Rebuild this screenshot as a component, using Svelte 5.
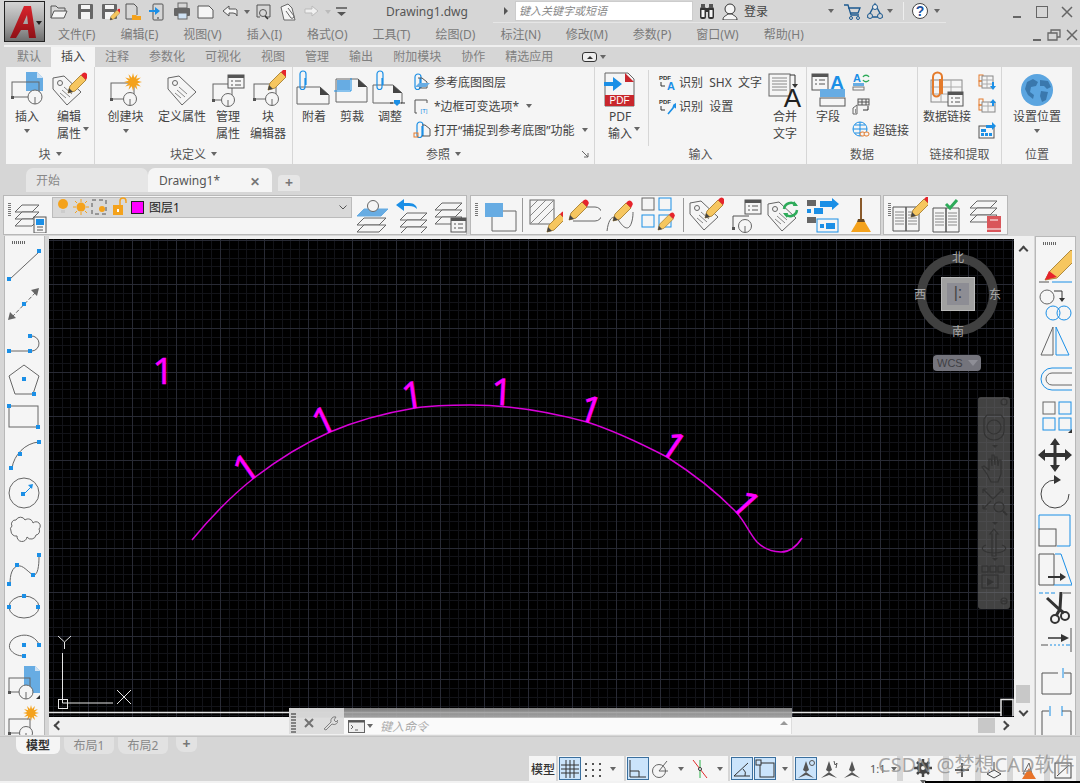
<script>
  const BLUE = "#1b8fe6";
  const LBLUE = "#67ace3";
  const ORANGE = "#f4a21c";

  const pt = (x, y) => `<rect x="${x - 2}" y="${y - 2}" width="4" height="4" fill="${BLUE}" stroke="none"/>`;
  const pencil = (x, y, s = 1) =>
    `<g transform="translate(${x} ${y}) scale(${s})"><path d="M0 0l2-7 11-11 5 5-11 11z" fill="#f6c65f" stroke="#b08a3e"/><path d="M0 0l1-5 4 4z" fill="#444" stroke="none"/><path d="M13-18l2-2a3 3 0 0 1 4 1 3 3 0 0 1 0 4l-1 2z" fill="#e6242c" stroke="none"/></g>`;
  const blk = (x, y, w = 24, h = 15, r = 7) =>
    `<rect x="${x}" y="${y}" width="${w}" height="${h}"/><rect x="${x - 1}" y="${y + h - 1}" width="3" height="3" fill="#555" stroke="none"/><circle cx="${x + w - 4}" cy="${y + h}" r="${r}" fill="#f5f5f5"/><path d="M${x + w - 4} ${y + h}v${r}" />`;
  const tag = (x, y) =>
    `<g transform="translate(${x} ${y})"><path d="M0 4L11 2 28 18 14 31 0 15z" fill="#f5f5f5"/><circle cx="7" cy="9" r="2.5"/><path d="M11 13l8 7M9 16l8 7M7 19l6 5" stroke="#888"/></g>`;
  const star = (x, y, r = 9) => {
    let d = "";
    for (let i = 0; i < 24; i++) {
      const a = (i * Math.PI) / 12;
      const q = i % 2 ? r * 0.5 : r;
      d += (i ? "L" : "M") + (x + q * Math.cos(a)).toFixed(1) + " " + (y + q * Math.sin(a)).toFixed(1);
    }
    return `<path d="${d}z" fill="${ORANGE}" stroke="none"/>`;
  };
  const list = (x, y, w = 16, h = 13) =>
    `<rect x="${x}" y="${y}" width="${w}" height="${h}" fill="#f5f5f5" stroke="#555"/><rect x="${x}" y="${y}" width="${w}" height="3" fill="#555" stroke="none"/><path d="M${x + 3} ${y + 6}h2M${x + 7} ${y + 6}h${w - 10}M${x + 3} ${y + 10}h2M${x + 7} ${y + 10}h${w - 10}" stroke="#555"/>`;
  const sheet = (x, y, w, h) =>
    `<path d="M${x} ${y + h}V${y}h${w - 9}l9 8v${h - 8}z" fill="#f5f5f5"/><path d="M${x + w - 9} ${y}l9 8h-9z" fill="#444" stroke="none"/>`;
  const clip = (x, y, s = BLUE) =>
    `<path d="M${x + 5} ${y + 4}v9a2.5 2.5 0 0 1-5 0V3a3 3 0 0 1 6 0v11" stroke="${s}" stroke-width="1.2" transform="translate(0 1)"/>`;
  const lay = (x, y, w = 18, st = "#666", f = "#f5f5f5") =>
    `<path d="M${x} ${y + 7}l7-7h${w}l-7 7z" fill="${f}" stroke="${st}"/>`;
  const lines = (x, y, w, n, gap = 3) => {
    let d = "";
    for (let i = 0; i < n; i++) d += `M${x} ${y + i * gap}h${w}`;
    return `<path d="${d}" stroke="#888"/>`;
  };
  const book = (x, y) =>
    `<path d="M${x} ${y + 3}h13v24h-13zM${x + 13} ${y + 3}h13v24h-13z" fill="#f5f5f5" stroke="#555"/>` + lines(x + 2, y + 8, 9, 5, 3) + lines(x + 15, y + 8, 9, 5, 3);

  const icons = {
    // ribbon large
    insert: `<path d="M17 2h11l6 6v13H17z" fill="${LBLUE}" stroke="none"/><path d="M28 2l6 6h-6z" fill="#cfe2f4" stroke="none"/>` + blk(3, 12, 27, 15, 7),
    editattr: tag(2, 4) + pencil(17, 23),
    createblk: blk(3, 13, 23, 16, 6.5) + star(25, 12, 9),
    defattr: tag(4, 4),
    mgattr: blk(3, 14, 19, 16, 6.5) + list(18, 5),
    blkedit: blk(4, 14, 22, 15, 6.5) + pencil(18, 20),
    attach: sheet(1, 17, 32, 17) + clip(4, 3),
    clipref: sheet(2, 9, 31, 23) + `<rect x="3" y="10" width="13" height="10" fill="${LBLUE}" stroke="none"/><path d="M0 21h17V8" stroke="${BLUE}"/>`,
    adjust: sheet(1, 15, 29, 18) + clip(5, 3) + `<path d="M22 30h6v3l-3 3-3-3z" fill="${BLUE}" stroke="none"/><path d="M18 33h3M29 33h4" stroke="#333"/>`,
    pdf: `<path d="M3 3h23l6 6v27H3z" fill="#f5f5f5"/><path d="M23 3l9 9h-9z" fill="#c8262c" stroke="none"/><rect x="3" y="25" width="29" height="11" fill="#c8262c" stroke="none"/><text x="17.5" y="34" class="svg-t pdf-t">PDF</text><path d="M2 12h9V7l9 7-9 7v-5H2z" fill="${BLUE}" stroke="none"/>`,
    merge: `<rect x="2" y="4" width="21" height="22" fill="#f5f5f5"/>` + lines(5, 8, 15, 5, 3) + `<path d="M23 5h5v10" stroke="#333"/><path d="M25 14h6l-3 4z" fill="#333" stroke="none"/><text x="25.5" y="37" class="svg-t merge-t">A</text>`,
    field: list(2, 4, 16, 16) + `<text x="27" y="19" class="svg-t fa-t">A</text><rect x="10" y="19" width="25" height="8" fill="${LBLUE}" stroke="none"/><rect x="10" y="28" width="25" height="8" fill="#f5f5f5" stroke="#555"/>`,
    datalink: `<rect x="2" y="10" width="31" height="22" fill="#f5f5f5" stroke="#888"/><path d="M2 17h31M2 24h31M12 10v22M22 10v22" stroke="#aaa"/><path d="M11 9v14a3.500 3.500 0 0 1-7 0V7a4.500 4.500 0 0 1 9 0v17" stroke="#e47b2c" stroke-width="2"/>` + list(19, 22, 15, 14),
    globe: `<circle cx="18" cy="20" r="16" fill="#5ba5e0" stroke="none"/><path d="M8 12l6-3 5 3-2 4-5 1-1 5 4 3-1 4-5-4-3-6zM21 10l8 1 3 6-4 2-3-3-4 0zM22 21l7 1-2 8-4 2-2-6z" fill="#3a78ad" stroke="none"/>`,
    // ribbon small
    s_under: clip(2, 0) + `<path d="M5 5h4l5 4v6H6" stroke="#555"/><path d="M2 14l4-4h11l-4 4z" fill="${LBLUE}" stroke="none"/>`,
    s_frame: `<path d="M2 16V3h12v3M2 16h2" stroke="#555"/><text x="11" y="16" class="svg-t tiny-t">[T]</text>`,
    s_open: clip(4, 0) + `<path d="M9 4h3l5 4v7h-8" stroke="#555"/><rect x="1" y="12" width="4" height="4" stroke="#e47b2c"/>`,
    s_shx: `<text x="1" y="7" class="svg-t pdfs-t">PDF</text><path d="M3 9v4h4" stroke="#333"/><text x="9" y="17" class="svg-t aa-t">A</text>`,
    s_set: `<text x="1" y="7" class="svg-t pdfs-t">PDF</text><path d="M3 9v4h4" stroke="#333"/><path d="M10 17l5-6 1-3 2-1-1 3 1 1" stroke="${BLUE}" stroke-width="1.6"/>`,
    s_upd: `<text x="1" y="9" class="svg-t aa-t">A</text><rect x="1" y="10" width="11" height="3" fill="${LBLUE}" stroke="none"/><rect x="1" y="14" width="11" height="3" fill="#f5f5f5" stroke="#777"/><path d="M11 4a3.5 3.5 0 0 1 6 0M17 7a3.5 3.5 0 0 1-6 0" stroke="#2eab5a" stroke-width="1.4"/>`,
    s_tbl: `<path d="M5 8v9H1v-6z" fill="#f5f5f5"/><rect x="6" y="2" width="11" height="6" fill="#eee" stroke="#555"/><path d="M6 5h11M10 2v6M14 2v6" stroke="#555"/><path d="M16 9v4h-5" stroke="#333"/><path d="M3 13h1M3 15h1" stroke="#333"/>`,
    s_web: `<circle cx="8" cy="8" r="7" fill="#f5f5f5" stroke="${BLUE}"/><path d="M1 8h14M8 1v14M3 4h10M3 12h10" stroke="${BLUE}"/><rect x="8" y="11" width="5" height="4" rx="2" fill="#f5f5f5" stroke="#e47b2c"/><rect x="12" y="11" width="5" height="4" rx="2" fill="#f5f5f5" stroke="#e47b2c"/>`,
    s_dl1: `<rect x="1" y="2" width="4" height="6" stroke="#e47b2c"/><rect x="1" y="8" width="4" height="5" stroke="#e47b2c"/><rect x="4" y="3" width="11" height="12" fill="#f5f5f5" stroke="#888"/><path d="M4 7h11M4 11h11M9 3v12" stroke="#aaa"/><path d="M14 9h2v4h2l-3 4-3-4h2z" fill="${BLUE}" stroke="none"/>`,
    s_dl2: `<rect x="1" y="2" width="4" height="6" stroke="#e47b2c"/><rect x="1" y="8" width="4" height="5" stroke="#e47b2c"/><rect x="4" y="5" width="13" height="10" fill="#f5f5f5" stroke="#888"/><path d="M4 9h13M10 5v10" stroke="#aaa"/><path d="M14 9V6h-2l3-4 3 4h-2v3z" fill="${BLUE}" stroke="none"/>`,
    s_dl3: `<rect x="1" y="5" width="15" height="12" fill="#f5f5f5" stroke="#555"/>` + `<rect x="3" y="8" width="5" height="3" fill="${BLUE}" stroke="none"/><rect x="3" y="12" width="3" height="3" fill="${BLUE}" stroke="none"/><rect x="7" y="12" width="3" height="3" fill="${BLUE}" stroke="none"/><rect x="11" y="12" width="3" height="3" fill="${BLUE}" stroke="none"/><path d="M8 4h6V1l4 4-4 4V7H8z" fill="${BLUE}" stroke="none"/>`,
    // quick access
    q_open: `<path d="M2 16V4h5l2 2h7v3" stroke="#555"/><path d="M2 16l3-7h13l-3 7z" fill="#f5f5f5" stroke="#555"/>`,
    q_save: `<rect x="2" y="2" width="15" height="15" rx="1" fill="#666" stroke="none"/><rect x="5" y="3" width="9" height="4" fill="#f5f5f5" stroke="none"/><rect x="5" y="10" width="9" height="7" fill="#f5f5f5" stroke="none"/>`,
    q_saveas: `<rect x="2" y="2" width="15" height="15" rx="1" fill="#666" stroke="none"/><rect x="5" y="3" width="9" height="4" fill="#f5f5f5" stroke="none"/><rect x="5" y="10" width="9" height="7" fill="#f5f5f5" stroke="none"/>` + pencil(10, 18, 0.55),
    q_sheet: `<path d="M3 17V2h8l3 3v8" stroke="#555"/><path d="M3 17h6" stroke="#555"/><path d="M9 18v-5h4l1 1h4v4z" fill="${ORANGE}" stroke="none"/>`,
    q_import: `<rect x="6" y="2" width="10" height="16" rx="1" stroke="#555"/><path d="M2 8h6V5l5 4-5 4v-3H2z" fill="${BLUE}" stroke="none"/><path d="M10 16h2" stroke="#333"/>`,
    q_print: `<rect x="6" y="1" width="9" height="5" stroke="#666"/><rect x="2" y="6" width="16" height="8" rx="1" fill="#666" stroke="none"/><rect x="6" y="11" width="9" height="6" fill="#cfe2f4" stroke="#666"/>`,
    q_page: `<path d="M2 16V4h11l4 4v8z" fill="#f5f5f5" stroke="#555"/>`,
    q_undo: `<path d="M8 4L2 9l6 5v-3h4a4 4 0 0 1 4 3V8a3 3 0 0 0-3-1H8z" fill="#f5f5f5" stroke="#555"/>`,
    q_redo: `<path d="M10 4l6 5-6 5v-3H3V7h7z" fill="#f0f0f0" stroke="#bbb"/>`,
    q_zoom: `<path d="M3 15V3h13v12h-4M3 15h3" stroke="#555"/><circle cx="9" cy="11" r="3.5" stroke="#555"/><path d="M11 14l3 3" stroke="#333" stroke-width="1.5"/>`,
    q_clip: `<path d="M2 5l7-3 4 4 3 12H5z" fill="#f5f5f5" stroke="#666"/><path d="M9 6l6 8a2 2 0 0 1-3 2L7 9" stroke="#666"/>`,
    q_menu: `<path d="M4 6h11" stroke="#555" stroke-width="1.5"/><path d="M5 10h9l-4.500 4z" fill="#555" stroke="none"/>`,
    binoc: `<rect x="2" y="5" width="6" height="12" rx="2" fill="#333" stroke="none"/><rect x="10" y="5" width="6" height="12" rx="2" fill="#333" stroke="none"/><rect x="3" y="2" width="4" height="4" fill="#555" stroke="none"/><rect x="11" y="2" width="4" height="4" fill="#555" stroke="none"/><rect x="7" y="6" width="4" height="4" fill="#333" stroke="none"/><rect x="3.500" y="8" width="3" height="7" fill="#f5f5f5" stroke="none"/><rect x="11.500" y="8" width="3" height="7" fill="#f5f5f5" stroke="none"/>`,
    user: `<circle cx="9" cy="7" r="5" fill="#f5f5f5" stroke="#333"/><path d="M2 18c0-4 3-4 5-6h4c2 2 5 2 5 6z" fill="#f5f5f5" stroke="#333"/>`,
    cart: `<path d="M1 3h4l3 10h8M5 6h12l-2 5H7" stroke="#1d5a90" stroke-width="1.300"/><circle cx="8" cy="16" r="1.500" stroke="#1d5a90"/><circle cx="15" cy="16" r="1.500" stroke="#1d5a90"/>`,
    a360: `<path d="M9 2l7 13H2z" stroke="#1d5a90" stroke-width="1.400"/><circle cx="9" cy="5" r="2.500" fill="#f0f0f0" stroke="#1d5a90"/><circle cx="4" cy="14" r="2.500" fill="#d6d6d6" stroke="#1d5a90"/><circle cx="14" cy="14" r="2.500" fill="#d6d6d6" stroke="#1d5a90"/>`,
    help: `<circle cx="9" cy="9" r="7.500" fill="#fff" stroke="#444"/><text x="9" y="14" class="svg-t help-t">?</text>`,
    // toolbars
    t_state: lay(1, 8, 17) + lay(1, 15, 17) + lay(1, 22, 17) + `<rect x="20" y="20" width="12" height="16" fill="#f5f5f5" stroke="#555"/><rect x="22" y="22" width="8" height="6" fill="${BLUE}" stroke="none"/><path d="M23 30h6M23 33h6" stroke="#555"/>`,
    t_iso: lay(2, 12, 24, LBLUE, LBLUE) + `<circle cx="18" cy="9" r="5.500" fill="#f5f5f5" stroke="#666"/>` + lay(2, 21, 22) + lay(2, 28, 22),
    t_prev: lay(6, 16, 20) + lay(6, 23, 20) + lay(6, 30, 20) + `<path d="M2 8l8-6v4h5c5 0 8 3 8 6-2-2-4-3-8-3h-5v5z" fill="${BLUE}" stroke="none"/>`,
    t_mgr: lay(2, 6, 20) + lay(2, 13, 20) + lay(2, 20, 20) + list(18, 21, 15, 14),
    t_make: `<path d="M21 14h13v20H10V20" stroke="#666"/><rect x="3" y="6" width="18" height="14" fill="${LBLUE}" stroke="none"/>`,
    t_hatch: `<rect x="3" y="3" width="24" height="24" stroke="#666"/><path d="M3 11l8-8M3 19L19 3M3 27L27 3M11 27l16-16" stroke="#888"/>` + pencil(20, 35),
    t_edit2: pencil(4, 23) + `<path d="M22 10h8a7 7 0 0 1 0 14H8" stroke="#666"/>`,
    t_spl: `<path d="M4 34c2-16 8-16 12-10s10 12 13 0c1-4 1-7 1-9" stroke="#666"/>` + pencil(10, 24),
    t_grid: `<rect x="1" y="1" width="12" height="12" stroke="#666"/><rect x="18" y="1" width="12" height="12" stroke="${BLUE}"/><rect x="1" y="18" width="12" height="12" stroke="${BLUE}"/><rect x="18" y="18" width="12" height="12" stroke="${BLUE}"/>` + pencil(17, 33, 0.85),
    t_tagedit: tag(2, 2) + pencil(17, 21),
    t_blkattr: `<path d="M6 31V19h16" stroke="#555"/><rect x="5" y="30" width="3" height="3" fill="#555" stroke="none"/><circle cx="18" cy="29" r="6.500" fill="#f5f5f5"/><path d="M18 29v6.500"/>` + list(18, 3, 16, 14),
    t_sync: tag(2, 3) + `<path d="M18 12a7 7 0 0 1 12-4M31 13a7 7 0 0 1-12 4" stroke="#2eab5a" stroke-width="2.500"/><path d="M28 4l4 5h-5zM21 21l-4-5h5z" fill="#2eab5a" stroke="none"/>`,
    t_order: `<rect x="2" y="3" width="9" height="6" fill="#666" stroke="none"/><rect x="2" y="12" width="4" height="4" fill="${BLUE}" stroke="none"/><rect x="9" y="11" width="9" height="6" fill="${BLUE}" stroke="none"/><rect x="2" y="20" width="9" height="6" fill="#666" stroke="none"/><path d="M15 4h12V1l7 6-7 6v-3H15z" fill="${BLUE}" stroke="none"/><rect x="12" y="22" width="21" height="13" fill="#f5f5f5" stroke="${BLUE}"/><rect x="15" y="27" width="4" height="4" fill="${BLUE}" stroke="none"/><rect x="21" y="26" width="9" height="6" fill="${BLUE}" stroke="none"/>`,
    t_broom: `<path d="M17 1v21" stroke="#8a5a2b" stroke-width="2"/><path d="M14 22h6l1 3h-8z" fill="#6b4a22" stroke="none"/><path d="M13 25h8l6 10H7z" fill="${ORANGE}" stroke="none"/>`,
    t_bookedit: book(1, 7) + pencil(19, 20),
    t_bookchk: book(3, 8) + `<path d="M16 7l4 4 7-8" stroke="#2eab5a" stroke-width="3"/>`,
    t_laybook: lay(2, 4, 20) + lay(2, 11, 20) + lay(2, 18, 20) + `<rect x="19" y="19" width="14" height="16" fill="#d9565a" stroke="none"/><path d="M19 32h14" stroke="#fff"/><path d="M22 23h8" stroke="#fff"/>`,
    // left tools
    l_line: `<path d="M4 32L33 5"/>` + pt(3, 32) + pt(33, 4),
    l_dim: `<path d="M6 32L31 6" stroke-dasharray="4 2"/><path d="M33 3l-2 8-6-6zM2 35l2-8 6 6z" fill="#666" stroke="none"/>` + pt(18, 19),
    l_poly: `<path d="M5 28h20M25 13a7.500 7.500 0 0 1 1 15"/>` + pt(3, 28) + pt(24, 28) + pt(24, 13),
    l_pent: `<path d="M18 4l15 11-6 18H9L3 15z"/>` + pt(18, 18) + pt(28, 33),
    l_rect: `<rect x="3" y="7" width="29" height="21"/>` + pt(3, 7) + pt(32, 28),
    l_arc: `<path d="M6 31C8 18 19 6 33 5"/>` + pt(5, 31) + pt(14, 17) + pt(33, 5),
    l_circle: `<circle cx="18" cy="18" r="15"/><path d="M18 19l8-8" stroke="${BLUE}"/><path d="M27 9l-1 5-4-4z" fill="${BLUE}" stroke="none"/>` + pt(17, 19),
    l_cloud: `<path d="M6 13a4 4 0 0 1 4-6 5 5 0 0 1 9 0 5 5 0 0 1 8 3 4 4 0 0 1 6 6 4 4 0 0 1-3 6 5 5 0 0 1-9 2 5 5 0 0 1-10-1 5 5 0 0 1-6-5 4 4 0 0 1 1-5z"/>`,
    l_spline: `<path d="M4 33c0-9 2-17 8-18 5-1 9 5 15 9 5 1 6-10 6-18"/>` + pt(3, 33) + pt(11, 14) + pt(27, 24) + pt(33, 4),
    l_ell: `<ellipse cx="18" cy="18" rx="15" ry="11"/>` + pt(18, 7) + pt(3, 18) + pt(32, 18),
    l_earc: `<path d="M33 17c-5-9-14-10-20-8C5 11 2 18 4 22c3 5 8 7 14 7"/>` + pt(18, 18) + pt(33, 18) + pt(18, 29),
    l_ins: `<path d="M18 1h11l5 5v22H18z" fill="${LBLUE}" stroke="none"/><path d="M29 1l5 5h-5z" fill="#cfe2f4" stroke="none"/>` + blk(3, 13, 21, 14, 7) + `<path d="M34 30v4h-4z" fill="#333" stroke="none"/>`,
    l_star: star(25, 10, 8) + blk(3, 16, 21, 14, 6.500),
    // right tools
    r_erase: `<path d="M7 33l5-9 21-21 7 7-21 21z" fill="#f6c65f" stroke="#b08a3e"/><path d="M7 33l4-9 8 6z" fill="#e6242c" stroke="none"/><path d="M1 35h10" stroke="#555"/><path d="M14 35h20" stroke="${BLUE}"/>`,
    r_fillet: `<circle cx="9" cy="12" r="7"/><path d="M16 6h8v8" stroke="#333"/><path d="M21 13h6l-3 4z" fill="#333" stroke="none"/><circle cx="15" cy="28" r="7" stroke="${BLUE}"/><circle cx="26" cy="28" r="7" stroke="${BLUE}"/>`,
    r_mirror: `<path d="M15 4L3 32h12z"/><path d="M18 4l13 28H18z" stroke="${BLUE}"/>`,
    r_offset: `<path d="M34 7H14a11 11 0 0 0 0 22h20" stroke="${BLUE}"/><path d="M34 12H14a6 6 0 0 0 0 12h20"/>`,
    r_array: `<rect x="5" y="3" width="12" height="12"/><rect x="21" y="3" width="12" height="12" stroke="${BLUE}"/><rect x="5" y="19" width="12" height="12" stroke="${BLUE}"/><rect x="21" y="19" width="12" height="12" stroke="${BLUE}"/><path d="M34 30v4h-4z" fill="#333" stroke="none"/>`,
    r_move: `<path d="M17 1l5 7h-3.500v8H27v-4l7 6-7 6v-4h-8.500v8H22l-5 7-5-7h3.500v-8H7v4l-7-6 7-6v4h8.500V8H12z" fill="#333" stroke="none"/>`,
    r_rotate: `<path d="M17 5A14 14 0 1 0 31 19" stroke="#444"/><path d="M16 0l7 5-7 4z" fill="#333" stroke="none"/>`,
    r_scale: `<path d="M1 16V2h31v31H19" stroke="${BLUE}"/><rect x="1" y="16" width="17" height="17" stroke="#555"/>`,
    r_stretch: `<path d="M16 3H1v31h15V3" stroke="#555"/><path d="M17 3h6l11 31H16" stroke="${BLUE}"/><path d="M10 25h12v-3l6 4-6 4v-3H10z" fill="#333" stroke="none"/>`,
    r_trim: `<path d="M1 4h4M7 4h4M13 4h4" stroke="${BLUE}"/><path d="M25 4h8" stroke="#555"/><path d="M23 3l-1 17-4 7M9 9l12 11 5 4" stroke="#333" stroke-width="3"/><circle cx="17" cy="30" r="4" stroke="#333" stroke-width="2"/><circle cx="27" cy="27" r="4" stroke="#333" stroke-width="2"/>`,
    r_extend: `<path d="M33 1v24" stroke="#555"/><path d="M10 11h15" stroke="#333" stroke-width="1.500"/><path d="M23 7l8 4-8 4z" fill="#333" stroke="none"/><path d="M3 18h7" stroke="#555"/><path d="M12 18h2M16 18h2M20 18h2M24 18h2M28 18h4" stroke="${BLUE}"/>`,
    r_brk: `<path d="M20 8H4v21h29V8h-7" stroke="#555"/><path d="M25 3v10" stroke="${BLUE}"/>`,
    r_brk2: `<path d="M4 36V8h7M31 8h2v28" stroke="#555"/><path d="M12 3v10M24 3v10" stroke="${BLUE}"/><path d="M24 8h7" stroke="#555"/>`,
    // status
    st_grid: `<path d="M2 7h18M2 11h18M2 15h18M7 2v18M11 2v18M15 2v18" stroke="#333"/>`,
    st_snap: `<path d="M3 6h2M10 6h2M17 6h2M3 12h2M10 12h2M17 12h2M3 18h2M10 18h2M17 18h2" stroke="#555" stroke-width="2"/>`,
    st_ortho: `<path d="M3 2v17h16" stroke="#333"/><path d="M3 13h9v6" stroke="#333"/>`,
    st_polar: `<circle cx="9" cy="13" r="6.500" stroke="#666"/><path d="M9 13l8-10" stroke="#666"/><path d="M9 13h9" stroke="#666"/>`,
    st_iso: `<path d="M4 2l14 18" stroke="#e02a2a"/><path d="M11 2v18" stroke="#2db24a"/><circle cx="11" cy="11" r="1.500" fill="#fff" stroke="#333"/>`,
    st_ang: `<path d="M3 18h16M3 18L17 5" stroke="#333"/><path d="M14 18a6 6 0 0 0-2-7" stroke="#333"/>`,
    st_osn: `<rect x="6" y="5" width="14" height="14" stroke="#333"/><rect x="2" y="2" width="5" height="5" fill="#cbe4fb" stroke="#333"/>`,
    st_ann: `<path d="M11 3l-3 9 3 2 3-2z" fill="#555" stroke="none"/><path d="M11 14l8 6-8-3-8 3z" fill="#555" stroke="none"/><circle cx="17" cy="5" r="2.500" stroke="#555"/>`,
    st_ann2: `<path d="M11 3l-3 9 3 2 3-2z" fill="#555" stroke="none"/><path d="M11 14l8 6-8-3-8 3z" fill="#555" stroke="none"/><path d="M16 3l1 4 2-2-1 5" stroke="#555"/>`,
    st_ann3: `<path d="M11 3l-3 9 3 2 3-2z" fill="#555" stroke="none"/><path d="M11 14l8 6-8-3-8 3z" fill="#555" stroke="none"/>`,
    st_gear: `<circle cx="11" cy="11" r="6" fill="#444" stroke="none"/><path d="M11 2v18M2 11h18M5 5l12 12M17 5L5 17" stroke="#444" stroke-width="2.500"/><circle cx="11" cy="11" r="2" fill="#f5f5f5" stroke="none"/>`,
    st_plus: `<path d="M11 4v14M4 11h14" stroke="#333" stroke-width="1.500"/>`,
    st_iso2: `<path d="M4 15l7 4 7-4-7-4z" stroke="#444"/><path d="M11 3v8" stroke="#444"/>`,
    st_warn: `<path d="M5 15L11 4l3 11z" stroke="#666"/><path d="M11 9l7 11H4z" fill="#e8742a" stroke="none"/>`,
    st_full: `<rect x="3" y="4" width="16" height="15" stroke="#444"/><path d="M5 17l12-11" stroke="#444"/>`,
    st_menu: `<path d="M3 5h16M3 11h16M3 17h16" stroke="#444" stroke-width="2"/>`,
  };

  const quick = [
    ["q_open", 7], ["q_save", 4], ["q_saveas", 3], ["q_sheet", 4], ["q_import", 5], ["q_print", 4], ["q_page", 5],
    ["q_undo", 2], ["dd", 4], ["q_zoom", 5], ["q_clip", 3], ["q_redo", 2], ["dd-off", 1], ["q_menu", 0],
  ];
  const menus = ["文件(F)", "编辑(E)", "视图(V)", "插入(I)", "格式(O)", "工具(T)", "绘图(D)", "标注(N)", "修改(M)", "参数(P)", "窗口(W)", "帮助(H)"];
  const tabs = ["默认", "插入", "注释", "参数化", "可视化", "视图", "管理", "输出", "附加模块", "协作", "精选应用"];

  const panels = [
    { w: 88, title: "块", arrow: true, items: [
      { icon: "insert", w: 42, label: ["插入"], under: true },
      { icon: "editattr", w: 42, label: ["编辑", "属性"], side: true },
    ] },
    { w: 197, title: "块定义", arrow: true, items: [
      { icon: "createblk", w: 61, label: ["创建块"], under: true },
      { icon: "defattr", w: 52, label: ["定义属性"] },
      { icon: "mgattr", w: 40, label: ["管理", "属性"] },
      { icon: "blkedit", w: 40, label: ["块", "编辑器"] },
    ] },
    { w: 301, title: "参照", arrow: true, launcher: true, pad: 2, items: [
      { icon: "attach", w: 38, label: ["附着"] },
      { icon: "clipref", w: 38, label: ["剪裁"] },
      { icon: "adjust", w: 38, label: ["调整"] },
      { rows: [["s_under", "参考底图图层"], ["s_frame", "*边框可变选项*", true], ["s_open", "打开“捕捉到参考底图”功能", true]], ml: 4, w: 180 },
    ] },
    { w: 211, title: "输入", pad: 5, items: [
      { icon: "pdf", w: 40, label: ["PDF", "输入"], side: true },
      { sep: true },
      { rows: [["s_shx", "识别  SHX  文字"], ["s_set", "识别  设置"]], ml: 9, w: 107 },
      { icon: "merge", w: 40, label: ["合并", "文字"] },
    ] },
    { w: 110, title: "数据", pad: 3, items: [
      { icon: "field", w: 36, label: ["字段"] },
      { rows: [["s_upd", ""], ["s_tbl", ""], ["s_web", "超链接"]], ml: 6, w: 64 },
    ] },
    { w: 83, title: "链接和提取", pad: 2, items: [
      { icon: "datalink", w: 54, label: ["数据链接"] },
      { rows: [["s_dl1", ""], ["s_dl2", ""], ["s_dl3", ""]], ml: 4, w: 20 },
    ] },
    { w: 70, title: "位置", items: [{ icon: "globe", w: 70, label: ["设置位置"], under: true }] },
  ];

  const bar1 = ["t_iso", "t_prev", "t_mgr"];
  const bar2a = ["t_hatch", "t_edit2", "t_spl", "t_grid"];
  const bar2b = ["t_tagedit", "t_blkattr", "t_sync", "t_order", "t_broom"];
  const bar3 = ["t_bookedit", "t_bookchk", "t_laybook"];

  const leftTools = ["l_line", "l_dim", "l_poly", "l_pent", "l_rect", "l_arc", "l_circle", "l_cloud", "l_spline", "l_ell", "l_earc", "l_ins", "l_star"];
  const rightTools = ["r_erase", "r_fillet", "r_mirror", "r_offset", "r_array", "r_move", "r_rotate", "r_scale", "r_stretch", "r_trim", "r_extend", "r_brk", "r_brk2"];

  const status = [
    { w: 27, items: [{ text: "模型" }] },
    { w: 66, items: [{ icon: "st_grid", on: true }, { icon: "st_snap" }, { dd: true }] },
    { w: 102, items: [{ icon: "st_ortho", on: true }, { icon: "st_polar" }, { dd: true }, { icon: "st_iso" }, { dd: true }] },
    { w: 62, items: [{ icon: "st_ang", on: true }, { icon: "st_osn", on: true }, { dd: true }] },
    { w: 103, items: [{ icon: "st_ann", on: true }, { icon: "st_ann2" }, { icon: "st_ann3" }, { scale: "1:1" }, { dd: true }] },
    { w: 40, items: [{ icon: "st_gear" }, { dd: true }], center: true },
    { w: 26, items: [{ icon: "st_plus" }], center: true },
    { w: 26, items: [{ icon: "st_iso2" }], center: true },
    { w: 31, items: [{ icon: "st_warn" }], center: true },
    { w: 26, items: [{ icon: "st_full" }], center: true },
    { w: 22, items: [{ icon: "st_menu" }], center: true },
  ];

  // canvas grid: one major every 44px, four minors between
  const CW = 965;
  const CH = 478;
  function gridPaths() {
    let major = "";
    let minor = "";
    for (let i = 0; i < 120; i++) {
      const x = Math.round(-5 + i * 8.8) + 0.5;
      const y = Math.round(1 + i * 8.79) + 0.5;
      const isMajor = i % 5 === 0;
      const vl = `M${x} 0V${CH}`;
      const hl = `M0 ${y}H${CW}`;
      if (isMajor) major += vl + hl;
      else minor += vl + hl;
    }
    return { major, minor };
  }
  const grid = gridPaths();

  // stem bottom point and rotation of each tilted "1"
  const ones = [
    [205, 239, -35], [281, 193, -25], [366, 169, -8], [453, 166, 3],
    [538, 183, 19], [618, 218, 34], [688, 274, 48],
  ];
  const curve = "M143 301C166 273 186 254 205 239C231 219 256 204 281 193C309 181 336 174 366 169C386 166 406 166 421 166C461 166 501 173 538 183C566 192 591 204 618 218C643 234 666 251 688 274C696 283 701 295 708 303C716 311 723 313 732 313C741 313 748 307 753 299";
</script>

{#snippet ic(name, w, h)}
  <svg class="ic" width={w} height={h} viewBox="0 0 {w} {h}">{@html icons[name]}</svg>
{/snippet}

<div class="app">
  <header class="head">
    <div class="appbtn">
      <svg width="26" height="34" viewBox="0 0 26 34">
        <defs><linearGradient id="logo" x1="0" y1="0" x2="0" y2="1"><stop offset="0" stop-color="#d8242c"/><stop offset="1" stop-color="#8f1016"/></linearGradient></defs>
        <path d="M0 33L14 1h7l5 32h-7l-1-8h-7l-5 8zM13 19h5l-1-9z" fill="url(#logo)" fill-rule="evenodd"/>
      </svg>
      <span class="dd dk appdd"></span>
    </div>
    <div class="headcol">
      <div class="topbar">
        <div class="quick">
          {#each quick as [name, gap]}
            {#if name === "dd"}
              <span class="dd q" style="margin-right:{gap}px"></span>
            {:else if name === "dd-off"}
              <span class="dd q off" style="margin-right:{gap}px"></span>
            {:else}
              <span class="qi" style="margin-right:{gap}px">{@render ic(name, 20, 20)}</span>
            {/if}
          {/each}
        </div>
        <div class="doctitle">Drawing1.dwg</div>
        <div class="search-area">
          <span class="tri"></span>
          <div class="search">键入关键字或短语</div>
          <span class="binoc">{@render ic("binoc", 18, 18)}</span>
          <span class="user">{@render ic("user", 18, 18)}</span>
          <span class="login">登录</span>
          <span class="dd login-dd"></span>
          <span class="cart">{@render ic("cart", 18, 18)}</span>
          <span class="a360">{@render ic("a360", 18, 18)}</span>
          <span class="dd a360-dd"></span>
          <span class="vsep"></span>
          <span class="help">{@render ic("help", 18, 18)}</span>
          <span class="dd help-dd"></span>
        </div>
        <div class="winbtns">
          <svg width="12" height="12" viewBox="0 0 12 12"><path d="M2 11h8" stroke="#666" stroke-width="2"/></svg>
          <svg width="12" height="12" viewBox="0 0 12 12"><rect x="0.500" y="0.500" width="11" height="11" fill="none" stroke="#666"/></svg>
          <svg width="12" height="12" viewBox="0 0 12 12"><path d="M1 1l10 10M11 1L1 11" stroke="#666" stroke-width="1.500"/></svg>
        </div>
      </div>
      <div class="menubar">
        {#each menus as m}<span>{m}</span>{/each}
        <div class="docbtns">
          <svg width="10" height="12" viewBox="0 0 10 12"><path d="M1 11h8" stroke="#666" stroke-width="2"/></svg>
          <svg width="14" height="12" viewBox="0 0 14 12"><path d="M1 4h9v7H1zM4 4V1h9v7h-3" fill="none" stroke="#666" stroke-width="1.300"/></svg>
          <svg width="12" height="12" viewBox="0 0 12 12"><path d="M1 1l10 10M11 1L1 11" stroke="#666" stroke-width="1.500"/></svg>
        </div>
      </div>
    </div>
  </header>

  <section class="ribbon">
    <nav class="rtabs">
      {#each tabs as t, i}
        <span class="rtab" class:active={i === 1}>{t}</span>
      {/each}
      <span class="rtoggle"><i></i></span>
      <span class="dd"></span>
    </nav>
    <div class="panels">
      {#each panels as p}
        <div class="panel" style="width:{p.w}px">
          <div class="pbody" style="padding-left:{p.pad ?? 0}px">
            {#each p.items as it}
              {#if it.sep}
                <span class="psep"></span>
              {:else if it.rows}
                <div class="srows" style="width:{it.w}px;margin-left:{it.ml}px">
                  {#each it.rows as [icon, text, more]}
                    <div class="srow">
                      {@render ic(icon, 18, 18)}
                      {#if text}<span>{text}</span>{/if}
                      {#if more}<span class="dd"></span>{/if}
                    </div>
                  {/each}
                </div>
              {:else}
                <div class="bigbtn" style="width:{it.w}px">
                  {@render ic(it.icon, 36, 38)}
                  {#each it.label as l, li}
                    <span class="blabel">{l}{#if it.side && li === it.label.length - 1}<span class="dd side"></span>{/if}</span>
                  {/each}
                  {#if it.under}<span class="dd under"></span>{/if}
                </div>
              {/if}
            {/each}
          </div>
          <div class="ptitle">
            {p.title}{#if p.arrow}<span class="dd"></span>{/if}
            {#if p.launcher}
              <svg class="launch" width="7" height="7" viewBox="0 0 7 7"><path d="M0 0l6 6M6 2v4H2" fill="none" stroke="#666"/></svg>
            {/if}
          </div>
        </div>
      {/each}
    </div>
  </section>

  <div class="doctabs">
    <span class="dtab back">开始</span>
    <span class="dtab cur">Drawing1*<b>✕</b></span>
    <span class="dplus">+</span>
  </div>

  <div class="toolrow">
    <div class="tbar b1">
      <span class="grip"></span>
      {@render ic("t_state", 36, 36)}
      <div class="combo">
        <svg width="15" height="20" viewBox="0 0 15 20"><circle cx="7" cy="7" r="5" fill="#f4a21c"/><path d="M5 13h4v3H5z" fill="#ccc"/></svg>
        <svg width="20" height="20" viewBox="0 0 20 20"><circle cx="10" cy="10" r="4.500" fill="#f4a21c"/><path d="M10 2v3M10 15v3M2 10h3M15 10h3M4 4l2 2M14 14l2 2M16 4l-2 2M6 14l-2 2" stroke="#f4a21c"/></svg>
        <svg width="18" height="20" viewBox="0 0 18 20"><path d="M1 3h14v14H1z" fill="none" stroke="#555" stroke-dasharray="4 3"/><circle cx="11" cy="12" r="3" fill="#f4a21c"/></svg>
        <svg class="lock" width="16" height="20" viewBox="0 0 16 20"><rect x="1" y="8" width="10" height="10" fill="#f4a21c"/><path d="M8 8V4a3 3 0 0 1 6 0v2" fill="none" stroke="#f4a21c" stroke-width="1.500"/><rect x="5" y="12" width="2" height="3" fill="#fff"/></svg>
        <span class="swatch"></span>
        <span class="lname">图层1</span>
        <svg class="chev" width="8" height="5" viewBox="0 0 8 5"><path d="M0.500 0.500L4 4l3.500-3.500" fill="none" stroke="#555"/></svg>
      </div>
      <div class="tb-icons one">
        {#each bar1 as n}{@render ic(n, 36, 36)}{/each}
      </div>
    </div>
    <div class="tbar b2">
      <span class="grip"></span>
      <span class="t-make">{@render ic("t_make", 36, 36)}</span>
      <span class="tsep s1"></span>
      <div class="tb-icons two">
        {#each bar2a as n}{@render ic(n, 36, 36)}{/each}
      </div>
      <span class="tsep s2"></span>
      <div class="tb-icons three">
        {#each bar2b as n}{@render ic(n, 36, 36)}{/each}
      </div>
    </div>
    <div class="tbar b3">
      <span class="grip"></span>
      <div class="tb-icons four">
        {#each bar3 as n}{@render ic(n, 36, 36)}{/each}
      </div>
    </div>
  </div>

  <main class="main">
    <aside class="vbar left">
      <span class="hgrip"></span>
      {#each leftTools as n}<div class="tool">{@render ic(n, 36, 36)}</div>{/each}
    </aside>

    <div class="center">
      <div class="viewrow">
        <div class="canvas">
          <svg class="drawing" width={CW} height={CH} viewBox="0 0 {CW} {CH}">
            <path d={grid.minor} stroke="#121318" fill="none"/>
            <path d={grid.major} stroke="#282a34" fill="none"/>
            <path d={curve} stroke="#d800d8" stroke-width="1.500" fill="none"/>
            <text x="103.500" y="145" class="one-t">1</text>
            {#each ones as [x, y, r]}
              <text transform="translate({x} {y}) rotate({r})" x="-11.500" y="0" class="one-t">1</text>
            {/each}
            <g stroke="#e4e4e4" fill="none">
              <path d="M13.500 414V464H64"/>
              <rect x="9.500" y="460.500" width="9" height="9"/>
              <path d="M9 397l6.500 6 6.500-6M15.500 403v7M68 451l14 14M82 451L68 465"/>
              <path d="M0 473.500H952" stroke-width="1.500"/>
              <path d="M952 477V460.500H964V477" stroke-width="1.500"/>
            </g>
          </svg>

          <div class="compass">
            <span class="ring"></span>
            <span class="cube"><i></i><em>|:</em></span>
            <span class="dir n">北</span>
            <span class="dir w">西</span>
            <span class="dir e">东</span>
            <span class="dir s">南</span>
          </div>
          <div class="wcs">WCS<span class="dd"></span></div>

          <div class="navbar">
            <svg width="32" height="212" viewBox="0 0 32 212" fill="none" stroke="#333" stroke-width="1.200">
              <circle cx="26" cy="5" r="3"/>
              <path d="M9 18h14l3 4v12c0 5-4 9-10 9s-10-4-10-9V22z"/>
              <circle cx="16" cy="30" r="7"/>
              <path d="M14 48h6l-3 3z" fill="#333" stroke="none"/>
              <path d="M9 77l-5-7 2-1 5 4V62l2 0 1 7V58h2l1 10V60h2l1 9 1-6h2v14l-3 8H13z"/>
              <path d="M5 92l10 10M5 92h4M5 92v4M25 92l-10 10M25 92h-4M25 92v4M5 112l8-8M5 112h4M5 112v-4"/>
              <circle cx="21" cy="110" r="5"/><path d="M25 114l4 4" stroke-width="2"/>
              <path d="M14 125h6l-3 3z" fill="#333" stroke="none"/>
              <path d="M16 132l4 5h-2v22h-4v-22h-2zM8 148c-8 3-2 8 8 8s16-5 8-8"/>
              <path d="M14 161h6l-3 3z" fill="#333" stroke="none"/>
              <rect x="4" y="169" width="6" height="6"/><rect x="12" y="169" width="6" height="6"/><rect x="20" y="169" width="6" height="6"/>
              <rect x="4" y="178" width="16" height="13"/><path d="M9 181l7 4-7 4z" fill="#333" stroke="none"/>
              <circle cx="26" cy="204" r="3"/><path d="M24 204h4"/>
            </svg>
          </div>
        </div>
        <div class="vscroll">
          <span class="sarrow up"></span>
          <span class="sfill"></span>
          <span class="vthumb"></span>
          <span class="sarrow down"></span>
        </div>
      </div>
      <div class="hscroll">
        <span class="harrow l"></span>
        <span class="sfill"></span>
        <span class="hthumb"></span>
        <span class="harrow r"></span>
      </div>

      <div class="cmdline">
        <div class="cmd-head"></div>
        <div class="cmd-body">
          <div class="cmd-left">
            <span class="cgrip"></span>
            <svg width="14" height="14" viewBox="0 0 14 14"><path d="M3 3l8 8M11 3l-8 8" stroke="#666" stroke-width="2"/></svg>
            <svg width="16" height="16" viewBox="0 0 16 16"><path d="M2 14l7-7a4 4 0 0 1 5-5l-2 3 2 2 2-2a4 4 0 0 1-6 4l-6 6z" fill="none" stroke="#777"/></svg>
          </div>
          <div class="cmd-input">
            <svg width="17" height="13" viewBox="0 0 17 13"><rect x="0.500" y="0.500" width="16" height="12" fill="#eee" stroke="#666"/><rect x="0.500" y="0.500" width="16" height="2" fill="#555"/><path d="M3 5l2 2-2 2M7 10h3" fill="none" stroke="#666"/></svg>
            <span class="dd"></span>
            <span class="ph">键入命令</span>
            <span class="cmdup"></span>
          </div>
        </div>
      </div>
    </div>

    <aside class="vbar right">
      <span class="hgrip"></span>
      {#each rightTools as n}<div class="tool">{@render ic(n, 34, 36)}</div>{/each}
    </aside>
  </main>

  <div class="layouts">
    <span class="ltab cur">模型</span>
    <span class="ltab">布局1</span>
    <span class="ltab">布局2</span>
    <span class="ltab plus">+</span>
  </div>

  <footer class="status">
    {#each status as g}
      <div class="sgroup" class:center={g.center} style="width:{g.w}px">
        {#each g.items as it}
          {#if it.text}
            <span class="smodel">{it.text}</span>
          {:else if it.scale}
            <span class="sscale">{it.scale}</span>
          {:else if it.dd}
            <span class="dd sdd"></span>
          {:else}
            <span class="sbtn" class:on={it.on}>{@render ic(it.icon, 22, 22)}</span>
          {/if}
        {/each}
      </div>
    {/each}
  </footer>
  <div class="strip"><i></i></div>
  <div class="wm">CSDN @梦想CAD软件</div>
</div>

<style>
  :global(body) { margin: 0; background: #d6d6d6; }
  .app {
    width: 1080px; height: 783px; position: relative; overflow: hidden;
    background: #d6d6d6; color: #444;
    font: 12px "Noto Sans", "Noto Sans CJK SC", sans-serif;
  }
  .ic { fill: none; stroke: #666; stroke-width: 1; flex-shrink: 0; display: block; }
  .ic :global(.svg-t) { stroke: none; text-anchor: middle; font-family: "Liberation Sans", sans-serif; }
  .ic :global(.pdf-t) { fill: #fff; font-size: 10px; }
  .ic :global(.merge-t) { fill: #222; font-size: 26px; }
  .ic :global(.fa-t) { fill: #1b8fe6; font-size: 19px; font-weight: 700; }
  .ic :global(.tiny-t) { fill: #1b8fe6; font-size: 6px; }
  .ic :global(.pdfs-t) { fill: #333; font-size: 6px; text-anchor: start; font-weight: 700; }
  .ic :global(.aa-t) { fill: #1b8fe6; font-size: 11px; font-weight: 700; text-anchor: start; }
  .ic :global(.help-t) { fill: #1d4f9c; font-size: 14px; font-weight: 700; }

  .dd {
    display: inline-block; width: 0; height: 0; flex-shrink: 0;
    border-left: 3.5px solid transparent; border-right: 3.5px solid transparent;
    border-top: 4px solid #666;
  }
  .dd.off { border-top-color: #bbb; }
  .dd.dk { border-top-color: #222; }

  /* title + menu */
  .head { display: flex; height: 45px; padding-left: 4px; }
  .appbtn {
    width: 41px; height: 41px; margin-top: 1px; position: relative; box-sizing: border-box;
    border: 1px solid #222; display: flex; align-items: center; padding-left: 5px;
    background: linear-gradient(#d4d4d4, #a0a0a0 60%, #6e6e6e);
  }
  .appdd { position: absolute; right: 2px; top: 19px; }
  .headcol { flex: 1; display: flex; flex-direction: column; padding-left: 4px; }
  .topbar { height: 23px; display: flex; align-items: center; position: relative; }
  .quick { display: flex; align-items: center; width: 320px; flex-shrink: 0; }
  .quick .qi { display: block; height: 20px; }
  .quick .dd.q { margin-left: 1px; }
  .doctitle { width: 132px; flex-shrink: 0; text-align: center; font: 12px "Noto Sans", sans-serif; color: #555; margin-left: -8px; margin-top: -1px; }
  .search-area { display: flex; align-items: center; height: 23px; width: 453px; flex-shrink: 0; border-bottom: 1px solid #e6e6e6; box-sizing: border-box; }
  .tri { width: 0; height: 0; border-top: 4px solid transparent; border-bottom: 4px solid transparent; border-left: 4px solid #555; margin-right: 7px; margin-left: 11px; flex-shrink: 0; }
  .search {
    width: 178px; height: 20px; box-sizing: border-box; background: #fff; border: 1px solid #ccc; flex-shrink: 0;
    font-size: 11px; font-style: italic; color: #888; padding-left: 3px; line-height: 18px;
  }
  .binoc { margin-left: 5px; }
  .user { margin-left: 5px; }
  .login { margin-left: 5px; color: #444; width: 84px; flex-shrink: 0; }
  .login-dd { margin-right: 9px; }
  .a360 { margin-left: 5px; }
  .a360-dd { margin-left: 3px; }
  .vsep { width: 1px; height: 18px; background: #eee; margin: 0 7px 0 10px; flex-shrink: 0; }
  .help-dd { margin-left: 5px; }
  .winbtns { position: absolute; right: 7px; top: 6px; display: flex; gap: 13px; }
  .menubar { height: 22px; display: flex; align-items: center; gap: 25px; padding-left: 9px; color: #7a7a7a; position: relative; }
  .docbtns { position: absolute; right: 2px; top: 6px; display: flex; gap: 5px; align-items: center; }

  /* ribbon */
  .ribbon { margin: 0 0 0 4px; border-top: 2px solid #f0f0f0; padding-left: 2px; }
  .rtabs { display: flex; height: 20px; align-items: center; padding-left: 1px; color: #808080; }
  .rtab { padding: 0 10px; line-height: 20px; height: 20px; }
  .rtab.active { background: #f5f5f5; color: #444; }
  .rtoggle { width: 13px; height: 8px; border: 1px solid #333; border-radius: 3px; margin: 0 3px 0 19px; display: flex; align-items: center; justify-content: center; background: #eee; }
  .rtoggle i { width: 0; height: 0; border-left: 3px solid transparent; border-right: 3px solid transparent; border-bottom: 3px solid #333; }
  .panels { display: flex; gap: 1px; height: 97px; }
  .panel { background: #f5f5f5; display: flex; flex-direction: column; flex-shrink: 0; box-sizing: border-box; }
  .pbody { flex: 1; display: flex; padding-top: 3px; min-height: 0; }
  .ptitle { height: 20px; display: flex; align-items: center; justify-content: center; gap: 5px; color: #555; position: relative; }
  .launch { position: absolute; right: 5px; top: 7px; }
  .bigbtn { display: flex; flex-direction: column; align-items: center; flex-shrink: 0; }
  .blabel { line-height: 17px; white-space: nowrap; position: relative; }
  .dd.side { position: absolute; right: -8px; top: 2px; }
  .dd.under { margin-top: 4px; }
  .psep { width: 1px; height: 76px; background: #d6d6d6; margin-left: 8px; flex-shrink: 0; }
  .srows { display: flex; flex-direction: column; padding-top: 3px; gap: 6px; flex-shrink: 0; }
  .srow { display: flex; align-items: center; gap: 3px; height: 18px; white-space: pre; }
  .srow .dd { margin-left: 4px; }

  /* document tabs */
  .doctabs { height: 27px; margin-top: 1px; display: flex; align-items: flex-end; padding-left: 26px; }
  .dtab { height: 24px; display: flex; align-items: center; box-sizing: border-box; border-radius: 7px 7px 0 0; }
  .dtab.back { width: 122px; background: #e6e6e6; color: #888; padding-left: 10px; }
  .dtab.cur { width: 124px; background: #f5f5f5; color: #555; padding-left: 11px; font-family: "Noto Sans", sans-serif; position: relative; }
  .dtab b { position: absolute; right: 12px; top: 5px; color: #777; font-size: 12px; }
  .dplus { width: 22px; height: 16px; margin-left: 6px; margin-bottom: 1px; background: #e6e6e6; border-radius: 4px 4px 0 0; text-align: center; line-height: 15px; color: #777; font-weight: 700; font-size: 14px; }

  /* toolbars */
  .toolrow { display: flex; height: 40px; margin-top: 3px; padding-left: 3px; gap: 3px; }
  .tbar { background: #f5f5f5; border: 1px solid #b8b8b8; box-sizing: border-box; display: flex; align-items: center; position: relative; }
  .b1 { width: 464px; }
  .b2 { width: 411px; }
  .b3 { width: 125px; margin-left: -1px; }
  .grip { width: 3px; height: 13px; margin: 0 3px 12px 4px; flex-shrink: 0; background: repeating-linear-gradient(#777 0 1px, transparent 1px 2px); }
  .combo {
    width: 300px; height: 21px; margin: 0 0 16px 2px; box-sizing: border-box; background: #d9d9d9; border: 1px solid #bbb;
    display: flex; align-items: center; padding-left: 3px; flex-shrink: 0;
  }
  .lock { margin-left: 3px; }
  .swatch { width: 13px; height: 13px; background: #ff00ff; border: 1px solid #222; box-sizing: border-box; margin-left: 3px; }
  .lname { color: #222; margin-left: 5px; }
  .chev { margin-left: auto; margin-right: 4px; }
  .tb-icons { display: flex; align-items: center; }
  .one { margin-left: 3px; gap: 3px; }
  .two { margin-left: 4px; gap: 2px; }
  .three { margin-left: 4px; gap: 3px; }
  .four { margin-left: -2px; gap: 2px; }
  .t-make { margin-left: 1px; }
  .tsep { width: 1px; height: 34px; background: #999; flex-shrink: 0; }
  .tsep.s1 { margin-left: 4px; }
  .tsep.s2 { margin-left: 6px; }

  /* main */
  .main { display: flex; height: 499px; margin-top: 1px; padding-left: 4px; position: relative; }
  .vbar {
    width: 41px; box-sizing: border-box; background: #f5f5f5; border: solid #b8b8b8; border-width: 0 1px;
    flex-shrink: 0; overflow: hidden; position: relative;
  }
  .vbar.left { padding-top: 10px; }
  .vbar.right { width: 41px; margin-left: 1px; border-width: 1px 1px 0; padding-top: 9px; }
  .hgrip { position: absolute; top: 5px; left: 7px; width: 14px; height: 3px; background: repeating-linear-gradient(90deg, #666 0 1px, transparent 1px 2px); }
  .tool { height: 38px; display: flex; align-items: center; padding-left: 1px; }
  .left .tool { padding-left: 1px; }
  .right .tool { padding-left: 2px; }
  .center { width: 985px; margin-left: 4px; background: #f0f0f0; position: relative; padding-top: 3px; box-sizing: border-box; display: flex; flex-direction: column; }
  .viewrow { display: flex; height: 478px; }
  .canvas { width: 965px; height: 478px; background: #000; position: relative; overflow: hidden; flex-shrink: 0; }
  .drawing { display: block; }
  .one-t { fill: #ff00ff; font: 37px "Noto Sans", sans-serif; stroke: #ff00ff; stroke-width: 0.5; }

  .compass { position: absolute; left: 867px; top: 12px; width: 84px; height: 90px; }
  .ring { position: absolute; left: 1px; top: 3px; width: 81px; height: 81px; box-sizing: border-box; border: 9px solid #404040; border-radius: 50%; }
  .cube { position: absolute; left: 25px; top: 26px; width: 34px; height: 34px; background: #a0a0a0; box-shadow: inset 0 0 0 1px #bbb; }
  .cube i { position: absolute; inset: 6px; background: #8d8d94; }
  .cube em { position: absolute; inset: 0; text-align: center; font: 16px/32px "Liberation Sans", sans-serif; color: #444; }
  .dir { position: absolute; color: #a8a8a8; line-height: 14px; }
  .dir.n { left: 36px; top: 0; }
  .dir.s { left: 36px; top: 74px; }
  .dir.w { left: -2px; top: 37px; }
  .dir.e { left: 73px; top: 37px; }
  .wcs {
    position: absolute; left: 884px; top: 116px; width: 48px; height: 16px; box-sizing: border-box; background: #74747c; border-radius: 4px;
    font: 11px/16px "Liberation Sans", sans-serif; color: #3f3f44; padding-left: 4px; display: flex; align-items: center; gap: 5px;
  }
  .wcs .dd { border-top-color: #8e8e96; border-left-width: 5px; border-right-width: 5px; border-top-width: 6px; }
  .navbar { position: absolute; left: 929px; top: 158px; width: 32px; height: 212px; background: rgba(120, 120, 120, 0.55); border-radius: 3px; }
  .navbar svg { display: block; }

  .vscroll { width: 20px; display: flex; flex-direction: column; align-items: center; }
  .sfill { flex: 1; }
  .vthumb { width: 14px; height: 18px; background: #c8c8c8; margin-left: -3px; margin-bottom: 5px; }
  .sarrow { width: 7px; height: 7px; box-sizing: border-box; border: solid #444; border-width: 2px 0 0 2px; margin-left: -2px; }
  .sarrow.up { transform: rotate(45deg); margin-top: 8px; }
  .sarrow.down { transform: rotate(225deg); margin-bottom: 2px; }
  .hscroll { height: 17px; display: flex; align-items: center; }
  .harrow { width: 7px; height: 7px; box-sizing: border-box; border: solid #444; border-width: 2px 0 0 2px; }
  .harrow.l { transform: rotate(-45deg); margin-left: 6px; }
  .harrow.r { transform: rotate(135deg); margin: 0 26px 0 6px; }
  .hthumb { width: 17px; height: 15px; background: #c8c8c8; }

  .cmdline { position: absolute; left: 240px; top: 472px; width: 503px; height: 26px; display: flex; flex-direction: column; }
  .cmd-head { height: 10px; background: linear-gradient(#8e8e8e, #b5b5b5); opacity: 0.9; flex-shrink: 0; }
  .cmd-body { flex: 1; display: flex; min-height: 0; }
  .cmd-left { width: 55px; background: #dcdcdc; margin-top: -10px; height: 26px; display: flex; align-items: center; gap: 6px; padding: 4px 0 0 2px; box-sizing: border-box; opacity: 0.9; }
  .cgrip { width: 5px; height: 20px; background: repeating-linear-gradient(#777 0 2px, transparent 2px 3px); }
  .cmd-input { flex: 1; background: #fafafa; display: flex; align-items: center; padding-left: 4px; position: relative; border-right: 1px solid #ddd; }
  .cmd-input .dd { margin-left: 2px; }
  .ph { margin-left: 7px; color: #aaa; font-style: italic; font-size: 12px; }
  .cmdup { position: absolute; right: 3px; top: 3px; width: 0; height: 0; border-left: 4px solid transparent; border-right: 4px solid transparent; border-bottom: 4px solid #999; }

  /* bottom */
  .layouts { height: 19px; margin-top: 1px; border-top: 1px solid #c4c4c4; display: flex; padding-left: 16px; gap: 4px; box-sizing: border-box; }
  .ltab { height: 17px; width: 50px; background: #e2e2e2; border-radius: 0 0 6px 8px; text-align: center; line-height: 17px; color: #888; }
  .ltab.cur { width: 44px; background: #f5f5f5; color: #333; font-weight: 700; }
  .ltab.plus { width: 21px; margin-left: 4px; height: 15px; line-height: 14px; font-weight: 700; font-size: 14px; color: #777; }
  .status { height: 25px; margin-top: 1px; display: flex; padding-left: 529px; gap: 2px; }
  .sgroup { height: 25px; background: #f5f5f5; display: flex; align-items: center; flex-shrink: 0; padding-left: 1px; box-sizing: border-box; }
  .sgroup.center { justify-content: center; padding-left: 0; }
  .sbtn { width: 22px; height: 23px; box-sizing: border-box; display: flex; align-items: center; justify-content: center; margin-right: 1px; flex-shrink: 0; }
  .sgroup.center .sbtn { margin-right: 0; }
  .sbtn.on { background: #cbe4fb; outline: 1px solid #3a6f9e; outline-offset: -1px; }
  .sdd { margin: 0 5px 0 5px; }
  .smodel { color: #333; width: 100%; text-align: center; font-weight: 500; }
  .sscale { color: #555; margin-left: 6px; font-size: 11px; }
  .strip { height: 2px; background: #f2f2f2; }
  .strip i { display: block; height: 2px; margin-left: 925px; background: #000; }
  .wm { position: absolute; left: 878px; top: 751px; font: 20px "Noto Sans", "Noto Sans CJK SC", sans-serif; color: rgba(140, 140, 140, 0.75); white-space: nowrap; line-height: 28px; }
</style>
